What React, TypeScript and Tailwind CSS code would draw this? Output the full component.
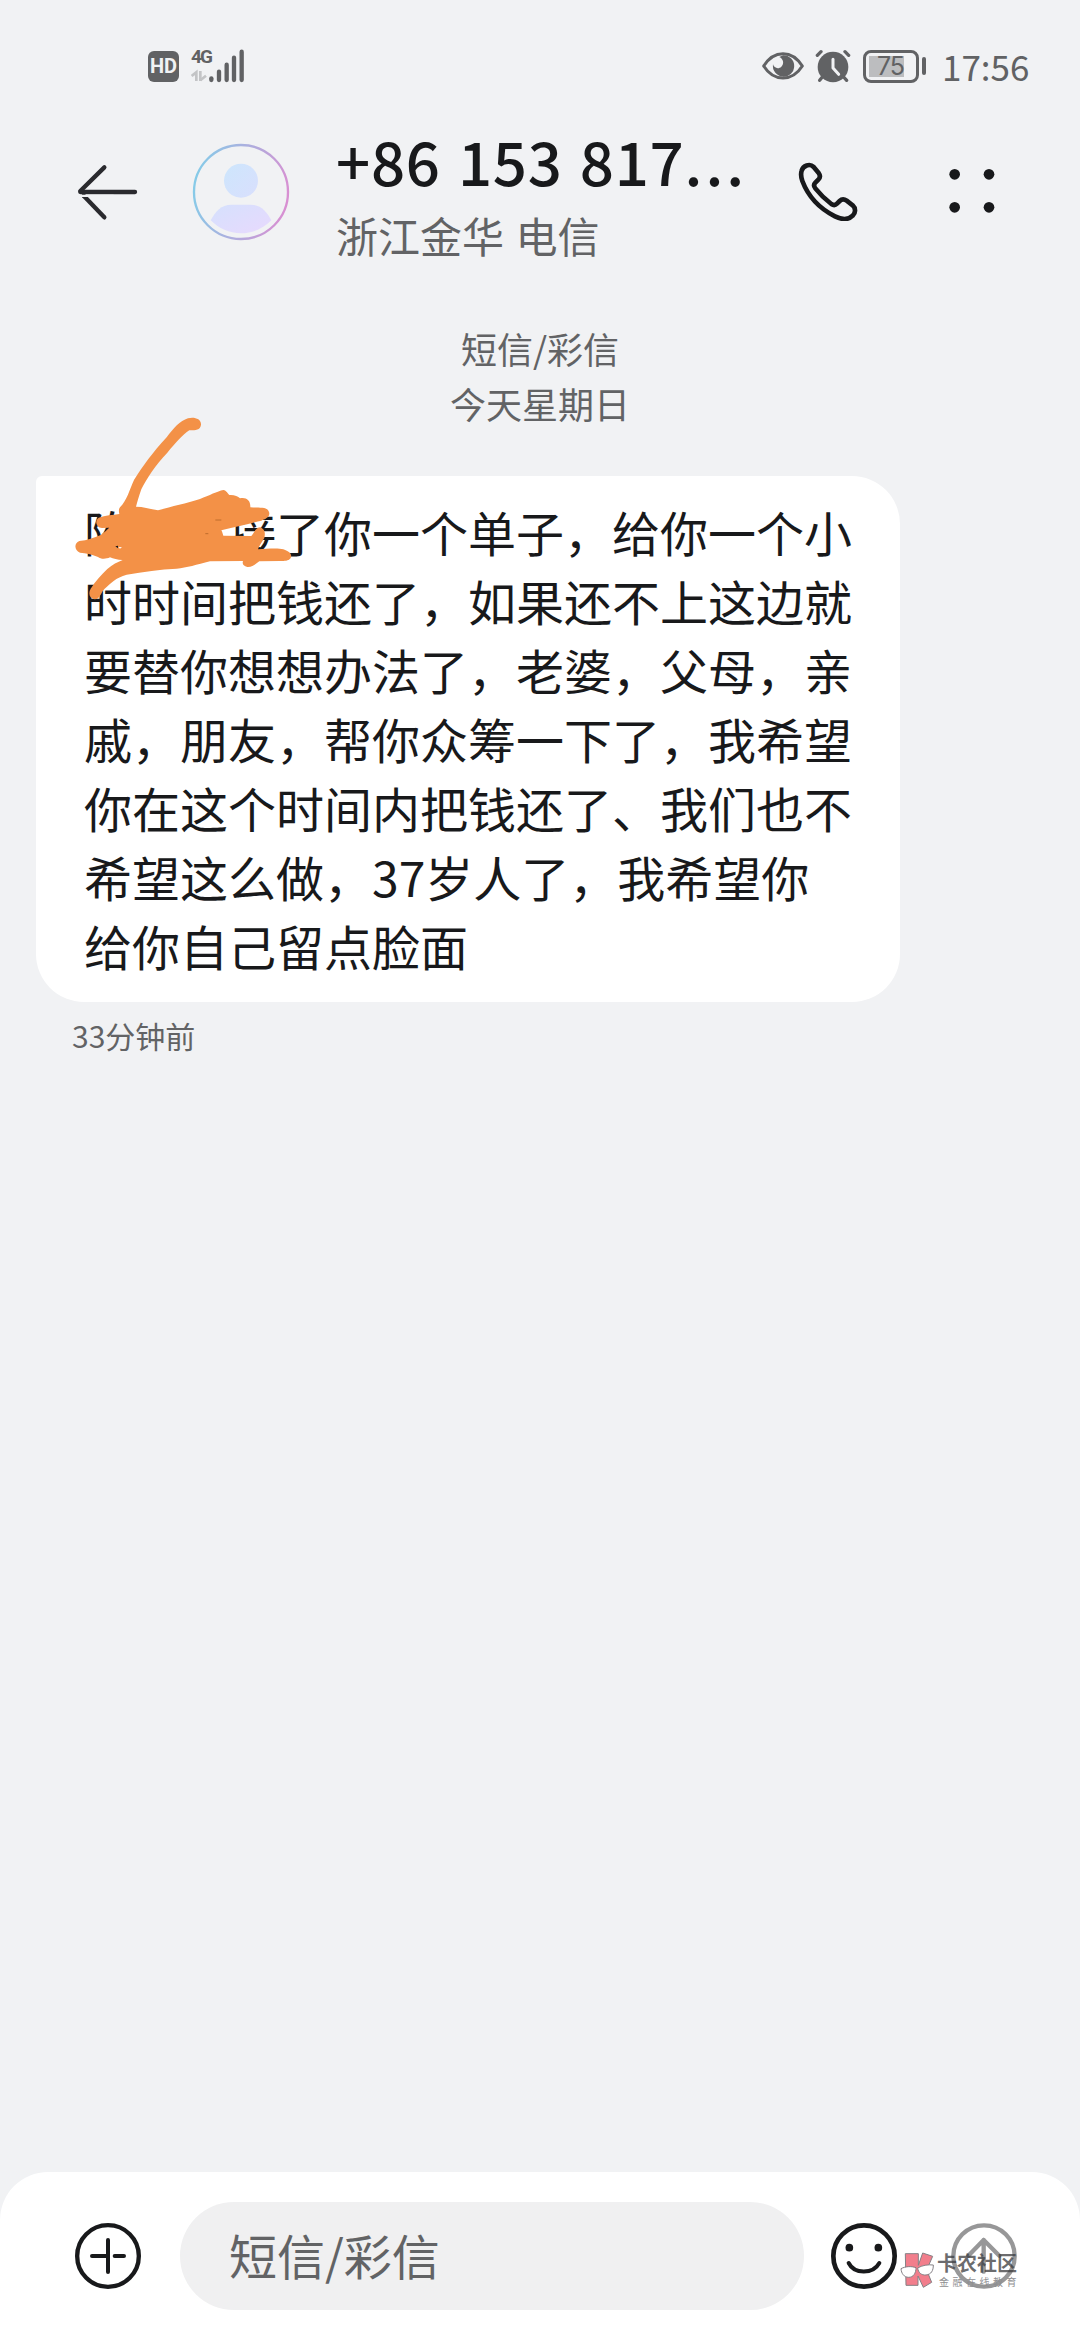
import React from "react";

const messageLines = [
  "陈　　接了你一个单子，给你一个小",
  "时时间把钱还了，如果还不上这边就",
  "要替你想想办法了，老婆，父母，亲",
  "戚，朋友，帮你众筹一下了，我希望",
  "你在这个时间内把钱还了、我们也不",
  "希望这么做，37岁人了，我希望你",
  "给你自己留点脸面",
];

const SignalIcon = () => (
  <svg width="53" height="35" viewBox="0 0 159 105" className="block">
    {/* data arrows */}
    <g stroke="#c3c4c6" strokeWidth="8" fill="none">
      <path d="M2 81 L16 70 V96" />
      <path d="M28 66 V96" />
      <path d="M28 94 L45 80" />
    </g>
    <g stroke="#616264" strokeWidth="13" strokeLinecap="round">
      <path d="M61 88 V93" />
      <path d="M84 68 V93" />
      <path d="M107 47 V93" />
      <path d="M129 26 V93" />
      <path d="M152 8 V93" />
    </g>
  </svg>
);

const EyeIcon = () => (
  <svg width="42" height="30" viewBox="0 0 126 90">
    <path
      d="M5 45 C22 18 42 8 63 8 C84 8 104 18 121 45 C104 72 84 81 63 81 C42 81 22 72 5 45 Z"
      fill="none"
      stroke="#616264"
      strokeWidth="9"
      strokeLinejoin="round"
    />
    <path
      d="M63 13 A32 32 0 1 1 33 40 C36 52 50 55 58 47 C67 38 65 24 52 18 Z"
      fill="#616264"
    />
  </svg>
);

const AlarmIcon = () => (
  <svg width="36" height="34" viewBox="0 0 108 102">
    <circle cx="54" cy="54" r="46" fill="#616264" />
    <g stroke="#616264" strokeWidth="10" strokeLinecap="round">
      <path d="M7 19 L18 8" />
      <path d="M90 8 L101 19" />
      <path d="M22 84 L14 94" />
      <path d="M86 84 L95 94" />
    </g>
    <path
      d="M54 31 V57 L71 76"
      fill="none"
      stroke="#f1f2f4"
      strokeWidth="9"
      strokeLinecap="round"
      strokeLinejoin="round"
    />
  </svg>
);

const BackIcon = () => (
  <svg width="62" height="58" viewBox="0 0 186 174">
    <g stroke="#2a2a2e" strokeWidth="13" strokeLinecap="round">
      <path d="M10 87 H174" />
      <path d="M10 84 L82 13" />
      <path d="M20 98 L82 163" />
    </g>
    <path d="M8 98.500 H110" stroke="#f1f2f4" strokeWidth="7" />
  </svg>
);

const Avatar = () => (
  <svg width="98" height="98" viewBox="0 0 294 294">
    <defs>
      <linearGradient id="ring" x1="0" y1="0.400" x2="1" y2="0.600">
        <stop offset="0" stopColor="#86cbe8" />
        <stop offset="0.400" stopColor="#a7b3e0" />
        <stop offset="0.650" stopColor="#b9a5da" />
        <stop offset="1" stopColor="#d98fd2" />
      </linearGradient>
      <linearGradient id="head" x1="0" y1="0" x2="1" y2="1">
        <stop offset="0" stopColor="#cde6fc" />
        <stop offset="1" stopColor="#d9dffd" />
      </linearGradient>
      <linearGradient id="body" x1="0" y1="0" x2="1" y2="1">
        <stop offset="0" stopColor="#d5e1fd" />
        <stop offset="1" stopColor="#e8d9fd" />
      </linearGradient>
    </defs>
    <circle cx="147" cy="147" r="141" fill="none" stroke="url(#ring)" strokeWidth="7" />
    <circle cx="147" cy="113" r="51" fill="url(#head)" />
    <path
      d="M56 232 C70 205 88 185 118 185 H176 C206 185 224 205 238 232 C214 256 182 271 147 271 C112 271 80 256 56 232 Z"
      fill="url(#body)"
    />
  </svg>
);

const PhoneIcon = () => (
  <svg width="60" height="60" viewBox="0 0 180 180">
    <path
      d="M10 25 C14 10 34 2 46 14 L61 32 C66 39 66 46 60 52 L51 61 C46 66 47 73 51 78 C67 98 82 112 99 125 C105 129 111 129 116 124 L124 116 C130 110 138 110 145 115 L163 129 C173 138 172 152 163 160 C149 174 130 172 110 162 C62 138 28 98 12 56 C8 45 7 35 10 25 Z"
      transform="translate(1,4)"
      fill="none"
      stroke="#18191b"
      strokeWidth="14"
      strokeLinejoin="round"
    />
  </svg>
);

const MoreIcon = () => (
  <svg width="46" height="44" viewBox="0 0 138 132" fill="#18191b">
    <circle cx="17" cy="16" r="16" />
    <circle cx="120" cy="16" r="16" />
    <circle cx="17" cy="115" r="16" />
    <circle cx="120" cy="115" r="16" />
  </svg>
);

// hand drawn marker strokes that hide the name
const Scribble = () => (
  <svg
    width="300"
    height="240"
    viewBox="0 0 900 720"
    className="absolute -left-[6px] -top-[76px]"
  >
    <path
      d="M270 322 C292 300 298 270 312 240 C340 196 366 160 410 112 C430 86 450 62 474 55 C492 50 514 56 513 74 C511 92 492 91 478 91 C458 104 436 130 412 158 C376 196 350 236 334 268 C326 290 322 306 318 320 C342 320 362 328 384 331 C420 320 470 310 510 297 C538 286 562 274 580 270 C590 272 592 280 598 285 C612 284 624 288 630 295 C648 291 662 300 661 322 C684 324 712 320 716 334 C724 350 706 358 694 362 C660 370 620 380 574 391 C578 398 578 402 580 407 L664 408 C674 396 676 384 690 382 C706 388 706 400 703 414 C696 426 688 436 684 448 C714 446 746 444 760 448 C778 454 786 462 783 472 C778 484 764 483 750 483 L688 484 C676 492 668 502 652 501 C640 498 636 492 639 483 L540 484 C500 494 470 504 440 506 C390 508 340 516 290 524 C258 532 240 552 224 566 C212 578 210 598 194 598 C178 596 174 580 182 566 C196 544 214 524 232 507 C248 494 262 486 278 480 C262 480 250 476 240 472 C228 478 212 478 204 471 C184 462 168 460 150 458 C132 450 132 430 148 423 C172 421 192 414 212 405 C222 398 230 390 238 383 L216 384 C200 384 192 364 206 353 C226 346 248 345 268 342 C266 334 266 326 270 322 Z"
      fill="#f39147"
    />
    <path d="M256 439 L264 437 V445 Z" fill="#18191b" />
    <path d="M265 442 L276 441 L270 446 Z" fill="#fff" />
    <path d="M556 360 H574 M526 401 H535" stroke="#a55a20" strokeWidth="2" />
  </svg>
);

const Watermark = () => (
  <div className="absolute left-[900px] top-[80px] flex items-start">
    <svg width="34" height="38" viewBox="0 0 102 114">
      <path
        d="M16 5 H55 V40 L68 3 L98 13 L80 54 L95 91 L70 106 L54 72 V100 H18 Z"
        fill="#f27e8c"
        stroke="#858085"
        strokeWidth="3"
        strokeLinejoin="round"
      />
      <path
        d="M3 50 C16 43 34 42 48 47 C48 64 40 76 26 76 C12 76 4 64 3 50 Z M53 48 C66 40 84 37 100 39 C100 56 94 67 78 69 C64 70 55 62 53 48 Z"
        fill="#fff"
        stroke="#858085"
        strokeWidth="3"
      />
    </svg>
    <div className="ml-[3px] flex flex-col whitespace-nowrap">
      <span className="text-[20px] font-bold leading-[22px] text-[#3c3c3e]/75">卡农社区</span>
      <span className="ml-[2px] mt-[2px] text-[10px] leading-[12px] tracking-[3.500px] text-[#8e8e90]">
        金融在线教育
      </span>
    </div>
  </div>
);

const App: React.FC = () => {
  return (
    <div className="flex h-[2340px] w-[1080px] flex-col overflow-hidden bg-[#f1f2f4] font-['Noto_Sans_CJK_SC',sans-serif] text-[#18191b]">
      {/* status bar */}
      <div className="flex h-[132px] items-center justify-between pl-[148px] pr-[51px] text-[#616264]">
        <div className="flex items-center">
          <div className="flex h-[31px] w-[31px] items-center justify-center rounded-[6px] bg-[#616264] font-['Roboto',sans-serif] text-[20px] font-bold leading-none text-[#f1f2f4]">
            HD
          </div>
          <div className="relative ml-[12px]">
            <SignalIcon />
            <span className="absolute -top-[2px] left-0 font-['Roboto',sans-serif] text-[19px] font-bold leading-[19px] tracking-[-2px]">
              4G
            </span>
          </div>
        </div>
        <div className="flex items-center">
          <EyeIcon />
          <div className="ml-[11px]">
            <AlarmIcon />
          </div>
          <div className="ml-[12px] flex h-[33px] w-[56px] items-center rounded-[8px] border-[3px] border-[#616264] px-[3px]">
            <div className="flex h-[21px] w-[35px] items-center justify-end bg-[#bcbdbf] font-['Inter',sans-serif] text-[25px] leading-none tracking-[-1px]">
              75
            </div>
          </div>
          <div className="ml-[3px] h-[18px] w-[4px] rounded-full bg-[#616264]" />
          <div className="ml-[16px] w-[87px] whitespace-nowrap pb-[1px] text-[35px] leading-[40px]">17:56</div>
        </div>
      </div>

      {/* header */}
      <div className="flex h-[168px] items-start pl-[77px]">
        <div className="pt-[31px]">
          <BackIcon />
        </div>
        <div className="ml-[53px] pt-[11px]">
          <Avatar />
        </div>
        <div className="ml-[46px] w-[410px] whitespace-nowrap">
          <h1 className="-mt-[4px] text-[60px] font-medium leading-[64px] tracking-[0.700px] [word-spacing:3px]">
            +86 153 817<span className="tracking-[3px]">...</span>
          </h1>
          <p className="mt-[15px] text-[42px] leading-[56px] text-[#626365]">
            浙江金华 <span className="ml-[2px]">电信</span>
          </p>
        </div>
        <div className="ml-[52px] pt-[29px]">
          <PhoneIcon />
        </div>
        <div className="ml-[91px] pt-[37px]">
          <MoreIcon />
        </div>
      </div>

      {/* conversation */}
      <div className="flex-1">
        <div className="pt-[21px] text-center text-[36px] leading-[55px] text-[#626365]">
          <p>短信/彩信</p>
          <p>今天星期日</p>
        </div>
        <div className="relative ml-[36px] mt-[45px] h-[526px] w-[864px] rounded-[48px] rounded-tl-[6px] bg-white pl-[48px] pt-[21px]">
          {messageLines.map((line) => (
            <p key={line} className="whitespace-nowrap text-[48px] leading-[69px]">
              {line}
            </p>
          ))}
          <Scribble />
        </div>
        <p className="ml-[72px] mt-[13px] text-[30px] leading-[40px] text-[#626365]">33分钟前</p>
      </div>

      {/* input bar */}
      <div className="relative flex h-[168px] items-start rounded-t-[48px] bg-white pl-[75px]">
        <svg width="66" height="66" viewBox="0 0 198 198" className="mt-[51px]">
          <circle cx="99" cy="99" r="92.500" fill="none" stroke="#18191b" strokeWidth="13" />
          <path d="M51 99 H99 M119 99 H147 M99 51 V147" stroke="#18191b" strokeWidth="12" strokeLinecap="round" />
        </svg>
        <div className="ml-[39px] mt-[30px] flex h-[108px] w-[624px] items-center rounded-full bg-[#f0f0f1] pb-[4px] pl-[49px] text-[48px] leading-none text-[#626365]">
          短信/彩信
        </div>
        <svg width="66" height="66" viewBox="0 0 198 198" className="ml-[27px] mt-[51px]">
          <circle cx="99" cy="99" r="92" fill="none" stroke="#18191b" strokeWidth="14" />
          <circle cx="55" cy="74" r="11.500" fill="#18191b" />
          <circle cx="142" cy="74" r="11.500" fill="#18191b" />
          <path
            d="M53 120 C70 154 126 154 145 120"
            fill="none"
            stroke="#18191b"
            strokeWidth="12"
            strokeLinecap="round"
          />
        </svg>
        <svg width="66" height="66" viewBox="0 0 198 198" className="ml-[54px] mt-[51px]">
          <g fill="none" stroke="#979798" strokeWidth="13" strokeLinecap="round" strokeLinejoin="round">
            <circle cx="99" cy="99" r="92" />
            <path d="M52 98 L98 51 L145 98 M98 51 V146" />
          </g>
        </svg>
        <Watermark />
      </div>
    </div>
  );
};

export default App;
